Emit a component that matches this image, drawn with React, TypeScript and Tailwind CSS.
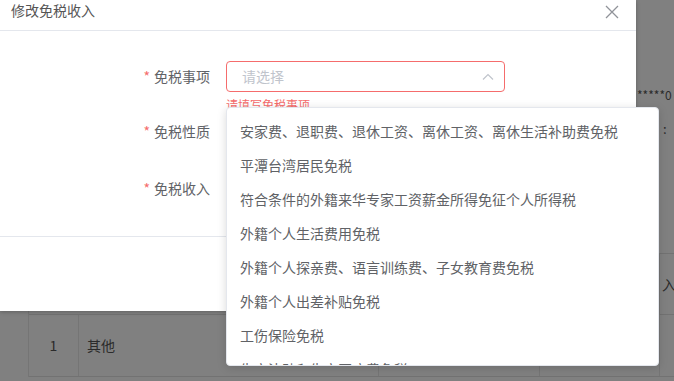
import React from "react";

const items = [
  "安家费、退职费、退休工资、离休工资、离休生活补助费免税",
  "平潭台湾居民免税",
  "符合条件的外籍来华专家工资薪金所得免征个人所得税",
  "外籍个人生活费用免税",
  "外籍个人探亲费、语言训练费、子女教育费免税",
  "外籍个人出差补贴免税",
  "工伤保险免税",
  "生育津贴和生育医疗费免税",
];

function Label({ text }: { text: string }) {
  return (
    <div className="w-[210px] flex justify-end items-center text-[14px] text-[#606266] pr-0">
      <span className="text-[#f56c6c] mr-[4px]">*</span>
      <span>{text}</span>
    </div>
  );
}

export default function App() {
  return (
    <div
      className="relative w-[674px] h-[381px] overflow-hidden bg-[#808080]"
      style={{ fontFamily: '"Noto Sans CJK SC", "Noto Sans", sans-serif' }}
    >
      {/* background page */}
      <div className="flex flex-col pt-[87px]">
        <div className="pl-[637px] h-[16px] text-[12px] leading-[16px] text-[#2b2b2b] whitespace-nowrap">*****0</div>
        <div className="pl-[663px] mt-[18px] h-[16px] text-[13px] leading-[16px] text-[#2b2b2b]">:</div>
        <div className="ml-[28px] mt-[116px] w-[700px] border-l border-[#757575]">
          <div className="h-[62px] border-t border-[#8a8a8a] border-b border-[#727272] flex">
            <div className="w-[631px] border-r border-[#727272]"></div>
            <div className="flex items-center pl-[2px] text-[14px] text-[#2b2b2b]">入</div>
          </div>
          <div className="h-[62px] border-b border-[#727272] flex text-[14px] text-[#2b2b2b]">
            <div className="w-[50px] border-r border-[#757575] flex items-center justify-center">1</div>
            <div className="w-[300px] border-r border-[#757575] flex items-center pl-[8px]">其他</div>
            <div className="w-[161px] border-r border-[#757575]"></div>
            <div className="w-[120px] border-r border-[#757575]"></div>
          </div>
        </div>
      </div>

      {/* dialog */}
      <div className="absolute left-0 top-0 w-[636px] h-[311px] bg-white shadow-[0_1px_4px_rgba(0,0,0,0.25)] flex flex-col">
        <div className="h-[31px] border-b border-[#e4e7ed] flex items-start justify-between pl-[11px] pr-[17px]">
          <span className="text-[14px] leading-[20px] text-[#555] mt-0">修改免税收入</span>
          <svg width="14" height="14" viewBox="0 0 14 14" className="mt-[5px]">
            <path d="M1 1 L13 13 M13 1 L1 13" stroke="#909399" strokeWidth="1.3" fill="none" />
          </svg>
        </div>
        <div className="flex flex-col pt-[30px]">
          <div className="flex items-start">
            <div className="h-[31px] flex items-center"><Label text="免税事项" /></div>
            <div className="ml-[16px] flex flex-col">
              <div className="w-[279px] h-[31px] border border-[#f56c6c] rounded-[4px] flex items-center justify-between pl-[15px] pr-[10px]">
                <span className="text-[14px] text-[#c0c4cc]">请选择</span>
                <svg width="12" height="8" viewBox="0 0 12 8">
                  <path d="M1 6.5 L6 1.5 L11 6.5" stroke="#c0c4cc" strokeWidth="1.2" fill="none" />
                </svg>
              </div>
              <div className="text-[12px] leading-[12px] mt-[7px] text-[#f56c6c]">请填写免税事项</div>
            </div>
          </div>
          <div className="flex items-center h-[31px] mt-[5px]"><Label text="免税性质" /></div>
          <div className="flex items-center h-[31px] mt-[26px]"><Label text="免税收入" /></div>
        </div>
        <div className="mt-[32px] border-t border-[#e4e7ed] flex-1"></div>
      </div>

      {/* dropdown */}
      <div className="absolute left-[226px] top-[107px] w-[433px] h-[259px] bg-white rounded-[4px] shadow-[0_2px_10px_rgba(0,0,0,0.15)] border border-[#e4e7ed] overflow-hidden pt-[6px]">
        {items.map((t) => (
          <div key={t} className="h-[34px] flex items-center pl-[13px] text-[14px] text-[#606266] whitespace-nowrap">
            {t}
          </div>
        ))}
      </div>
    </div>
  );
}
